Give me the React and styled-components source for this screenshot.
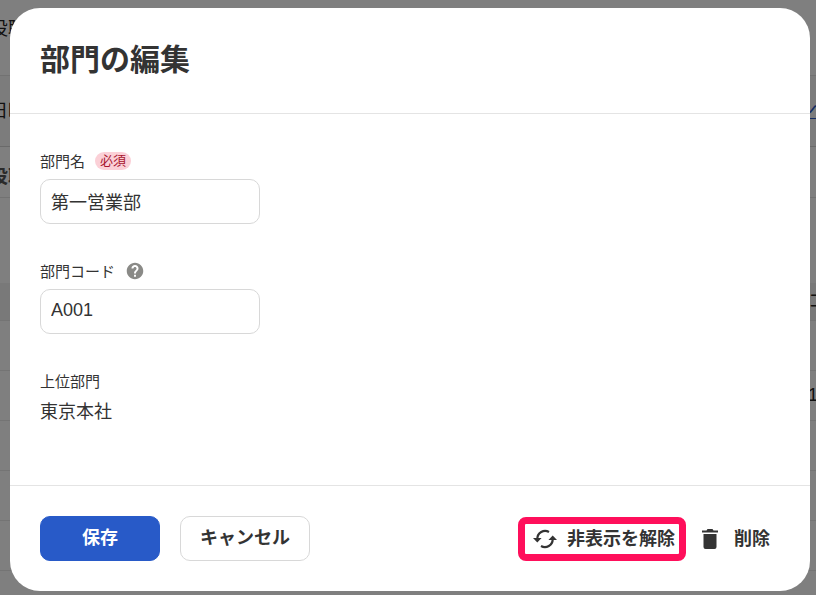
import React, { useState } from "react";
import styled, { createGlobalStyle } from "styled-components";

const listRows = ["", "1", "", "", "", ""];

function RefreshIcon() {
  return (
    <svg width="24" height="20" viewBox="0 0 24 20" aria-hidden="true">
      <path
        d="M16 3A7.800 7.800 0 0 0 4.300 9.800M8 17A7.800 7.800 0 0 0 19.700 10.200"
        fill="none"
        stroke="currentColor"
        strokeWidth="2.2"
      />
      <path d="M0 9H8.600L4.300 13.600ZM15.400 11H24L19.700 6.400Z" fill="currentColor" />
    </svg>
  );
}

function TrashIcon() {
  return (
    <svg width="16" height="20" viewBox="0 0 16 20" aria-hidden="true">
      <path
        d="M0 1.500H4.500L5.500 0H10.500L11.500 1.500H16V3.500H0ZM1.500 5H14.500V18A2 2 0 0 1 12.500 20H3.500A2 2 0 0 1 1.500 18Z"
        fill="currentColor"
      />
    </svg>
  );
}

function HelpIcon() {
  return (
    <svg width="18" height="18" viewBox="0 0 24 24" aria-hidden="true">
      <path
        d="M12 1C5.900 1 1 5.900 1 12s4.900 11 11 11 11-4.900 11-11S18.100 1 12 1zm1.300 18.600h-2.600v-2.500h2.600v2.500zm2.500-8.500-1.100 1.100c-.9.9-1.400 1.600-1.400 3.200h-2.600v-.6c0-1.200.5-2.300 1.400-3.200l1.400-1.400c.4-.4.600-.9.600-1.500 0-1.200-1-2.100-2.100-2.100s-2.100.9-2.100 2.100H7.300c0-2.600 2.100-4.600 4.700-4.600s4.700 2 4.700 4.600c0 .9-.4 1.800-.9 2.400z"
        fill="currentColor"
      />
    </svg>
  );
}

function DepartmentList() {
  return (
    <Page aria-hidden="true">
      <TopBar>役職</TopBar>
      <InfoBar>
        <span>日時</span>
        <a href="#help">ヘルプ</a>
      </InfoBar>
      <PageTitle>役職</PageTitle>
      <ListTable>
        <thead>
          <tr>
            <th></th>
            <th>コード</th>
          </tr>
        </thead>
        <tbody>
          {listRows.map((code, i) => (
            <tr key={i}>
              <td></td>
              <td>{code}</td>
            </tr>
          ))}
        </tbody>
      </ListTable>
    </Page>
  );
}

function App() {
  const [name, setName] = useState("第一営業部");
  const [code, setCode] = useState("A001");

  return (
    <>
      <GlobalStyle />
      <DepartmentList />
      <Overlay>
        <Modal role="dialog" aria-modal="true" aria-labelledby="modal-title">
          <ModalHeader>
            <h1 id="modal-title">部門の編集</h1>
          </ModalHeader>
          {/* FORM */}
          <ModalBody>
            <Field>
              <LabelRow>
                <label htmlFor="name">部門名</label>
                <Badge>必須</Badge>
              </LabelRow>
              <TextInput
                id="name"
                type="text"
                value={name}
                onChange={(e) => setName(e.target.value)}
              />
            </Field>
            <Field>
              <LabelRow>
                <label htmlFor="code">部門コード</label>
                <HelpButton type="button" aria-label="ヘルプ">
                  <HelpIcon />
                </HelpButton>
              </LabelRow>
              <TextInput
                id="code"
                type="text"
                value={code}
                onChange={(e) => setCode(e.target.value)}
              />
            </Field>
            <Field>
              <LabelRow>上位部門</LabelRow>
              <FieldValue>東京本社</FieldValue>
            </Field>
          </ModalBody>
          {/* ACTIONS */}
          <ModalFooter>
            <ButtonGroup>
              <Button type="button" $primary>
                保存
              </Button>
              <Button type="button">キャンセル</Button>
            </ButtonGroup>
            <IconActions>
              <IconButton type="button" $highlighted>
                <RefreshIcon />
                非表示を解除
              </IconButton>
              <IconButton type="button">
                <TrashIcon />
                削除
              </IconButton>
            </IconActions>
          </ModalFooter>
        </Modal>
      </Overlay>
    </>
  );
}

export default App;

const GlobalStyle = createGlobalStyle`
  * {
    box-sizing: border-box;
  }
  body {
    margin: 0;
    overflow: hidden;
    background-color: #fff;
    color: #333;
    font-family: "Liberation Sans", "Noto Sans CJK JP", sans-serif;
    font-size: 18px;
  }
  button,
  input {
    font: inherit;
    color: inherit;
  }
`;

const Page = styled.div`
  height: 100vh;
  overflow: hidden;
  margin: 0 -50px 0 -10px;
  color: #222;
`;

const TopBar = styled.div`
  display: flex;
  align-items: center;
  height: 76px;
  padding-bottom: 22px;
  border-bottom: 1px solid #e4e4e4;
`;

const InfoBar = styled.div`
  display: flex;
  align-items: center;
  justify-content: space-between;
  height: 71px;
  padding-bottom: 4px;
  background-color: #f8f8f8;
  border-bottom: 1px solid #d4d4d4;
  > a {
    width: 58px;
    color: #285ac8;
  }
`;

const PageTitle = styled.h2`
  display: flex;
  align-items: center;
  height: 51px;
  margin: 0 0 85px;
  padding-top: 6px;
  border-bottom: 1px solid #e4e4e4;
  color: #555;
  font-size: 18px;
  font-weight: 700;
`;

const ListTable = styled.table`
  width: 100%;
  border-collapse: collapse;
  table-layout: fixed;
  th,
  td {
    height: 50px;
    padding: 0;
    border-bottom: 1px solid #e8e8e8;
    text-align: left;
    font-weight: 400;
    line-height: 24px;
  }
  th {
    height: 37px;
    background-color: #f2f2f2;
  }
  th:last-child,
  td:last-child {
    width: 58px;
  }
`;

const Overlay = styled.div`
  position: fixed;
  inset: 0;
  padding: 8px 6px 4px 10px;
  background-color: rgb(0 0 0 / 0.5);
  overflow: hidden;
`;

const Modal = styled.div`
  background-color: #fff;
  border-radius: 30px;
`;

const ModalHeader = styled.div`
  padding: 29px 30px 31px;
  border-bottom: 1px solid #e4e4e4;
  > h1 {
    margin: 0;
    font-size: 30px;
    font-weight: 700;
    line-height: 45px;
  }
`;

const ModalBody = styled.div`
  display: flex;
  flex-direction: column;
  gap: 30px;
  padding: 30px 30px 60px;
`;

const Field = styled.div`
  display: flex;
  flex-direction: column;
  align-items: flex-start;
`;

const LabelRow = styled.div`
  display: flex;
  align-items: center;
  gap: 10px;
  height: 35px;
  padding-bottom: 2px;
  font-size: 15px;
`;

const Badge = styled.span`
  padding: 0 5px;
  border-radius: 9px;
  background-color: #fbd0d7;
  color: #a8142f;
  font-size: 13px;
  line-height: 18px;
`;

const HelpButton = styled.button`
  display: flex;
  padding: 0 1px;
  border: 0;
  background: none;
  color: #8a8a87;
  cursor: pointer;
`;

const TextInput = styled.input`
  width: 220px;
  height: 45px;
  padding: 0 10px 2px;
  border: 1px solid #d8d8d8;
  border-radius: 10px;
  background-color: #fff;
`;

const FieldValue = styled.div`
  line-height: 26px;
`;

const ModalFooter = styled.div`
  display: flex;
  align-items: center;
  justify-content: space-between;
  padding: 30px;
  border-top: 1px solid #e4e4e4;
`;

const ButtonGroup = styled.div`
  display: flex;
  gap: 20px;
`;

const Button = styled.button`
  min-width: 120px;
  height: 45px;
  padding: 0 19px 2px;
  border: 1px solid ${({ $primary }) => ($primary ? "#285ac8" : "#d8d8d8")};
  border-radius: 10px;
  background-color: ${({ $primary }) => ($primary ? "#285ac8" : "#fff")};
  color: ${({ $primary }) => ($primary ? "#fff" : "#333")};
  font-weight: 700;
  line-height: 24px;
  cursor: pointer;
`;

const IconActions = styled.div`
  display: flex;
  align-items: center;
`;

const IconButton = styled.button`
  display: flex;
  align-items: center;
  gap: ${({ $highlighted }) => ($highlighted ? "10px" : "16px")};
  height: 44px;
  padding: 0 ${({ $highlighted }) => ($highlighted ? "4px 0 8px" : "10px 0 16px")};
  border: ${({ $highlighted }) => ($highlighted ? "7px solid #ff0f5b" : "0")};
  border-radius: 8px;
  background: none;
  font-weight: 700;
  line-height: 24px;
  cursor: pointer;
`;
